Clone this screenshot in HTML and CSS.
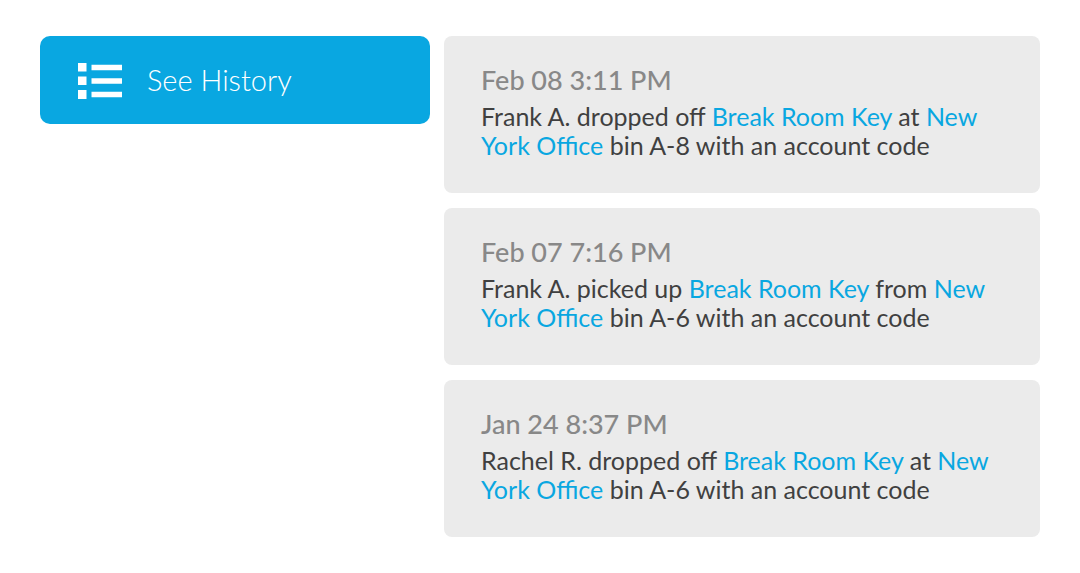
FILE: index.html
```
<!DOCTYPE html>
<html lang="en">
<head>
<meta charset="UTF-8">
<meta name="viewport" content="width=device-width, initial-scale=1.0">
<title>Key History</title>
<link rel="stylesheet" href="styles.css">
</head>
<body>

<div class="container">
  <button type="button" class="history-button">
    <svg class="icon" viewBox="0 0 46 38" aria-hidden="true">
      <path d="M0 2h8.5v8.5H0zM0 15.5h8.5v8.5H0zM0 29h8.5v9H0zM13.5 3.8H44v5.4H13.5zM13.5 17.3H44v5.4H13.5zM13.5 30.8H44v5.4H13.5z"/>
    </svg>
    <span>See History</span>
  </button>

  <ul class="history">
    <li>
      <h2>Feb 08 3:11 PM</h2>
      <p>Frank A. dropped off <a href="#">Break Room Key</a> at <a href="#">New<br>York Office</a> bin A-8 with an account code</p>
    </li>
    <li>
      <h2>Feb 07 7:16 PM</h2>
      <p>Frank A. picked up <a href="#">Break Room Key</a> from <a href="#">New<br>York Office</a> bin A-6 with an account code</p>
    </li>
    <li>
      <h2>Jan 24 8:37 PM</h2>
      <p>Rachel R. dropped off <a href="#">Break Room Key</a> at <a href="#">New<br>York Office</a> bin A-6 with an account code</p>
    </li>
  </ul>
</div>

</body>
</html>
```

FILE: styles.css
```
* {
  box-sizing: border-box;
}
body {
  font-family: Lato, sans-serif;
  background-color: #fff;
  color: #404040;
  margin: 0;
}
.container {
  display: grid;
  grid-template-columns: 390fr 596fr;
  gap: 14px;
  align-items: start;
  padding: 36px 40px;
}
.history-button {
  display: flex;
  align-items: center;
  gap: 23px;
  height: 88px;
  padding: 0 38px;
  border: none;
  border-radius: 10px;
  background-color: #09a7e1;
  color: #fff;
  font-family: inherit;
  font-size: 29px;
  font-weight: 300;
  line-height: 36px;
  cursor: pointer;
}
.icon {
  width: 46px;
  height: 38px;
  fill: #fff;
}
.history {
  display: grid;
  gap: 15px;
  list-style: none;
  margin: 0;
  padding: 0;
}
.history li {
  min-height: 157px;
  padding: 28px 37px;
  border-radius: 8px;
  background-color: #ebebeb;
}
h2 {
  margin: 0 0 6px;
  color: #888;
  font-size: 27px;
  font-weight: 500;
  line-height: 32px;
}
p {
  margin: 0;
  font-size: 25px;
  line-height: 29px;
}
a {
  color: #09a7e1;
  text-decoration: none;
}
```
